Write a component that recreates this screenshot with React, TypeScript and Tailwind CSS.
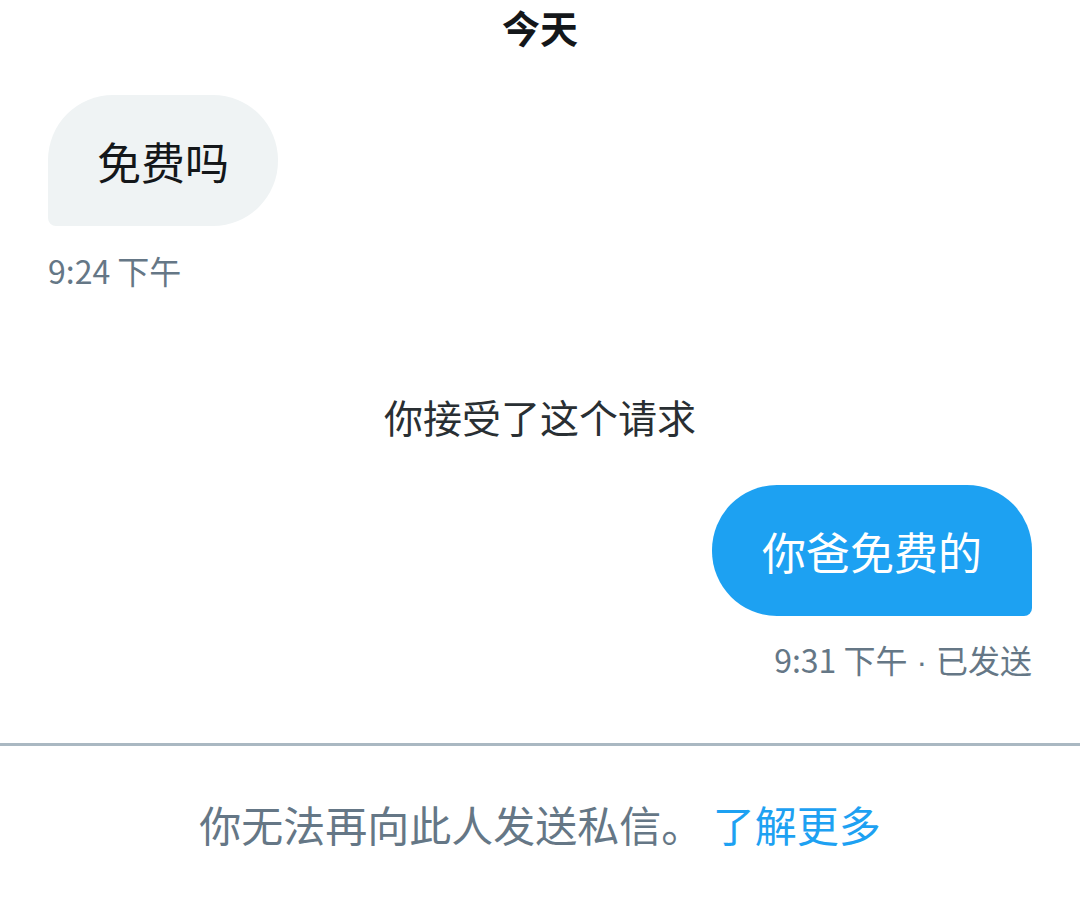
const font = {
  fontFamily: '"Noto Sans CJK SC", "Noto Sans", "Liberation Sans", sans-serif',
};

export default function App() {
  return (
    <div className="w-full min-h-[902px] bg-white flex flex-col" style={font}>
      <div className="pt-[6px] text-center text-[38px] leading-[42px] font-bold text-[#14171a]">
        今天
      </div>

      <div className="px-[48px] mt-[47px] flex flex-col items-start">
        <div className="h-[131px] px-[49px] flex items-center bg-[#eff3f4] rounded-[65px] rounded-bl-[8px] text-[44px] leading-none text-[#14171a]">
          免费吗
        </div>
        <div className="mt-[26px] text-[32px] leading-[36px] text-[#657786]">9:24 下午</div>
      </div>

      <div className="mt-[106px] text-center text-[39px] leading-[44px] text-[#292f33]">
        你接受了这个请求
      </div>

      <div className="px-[48px] mt-[47px] flex flex-col items-end">
        <div className="h-[131px] px-[50px] flex items-center bg-[#1da1f2] rounded-[65px] rounded-br-[8px] text-[44px] leading-none text-white">
          你爸免费的
        </div>
        <div className="mt-[25px] h-[36px] text-[32px] leading-[36px] text-[#657786]">
          9:31 下午
          <span className="font-['Liberation_Sans',sans-serif] leading-[36px]"> · </span>
          已发送
        </div>
      </div>

      <div className="mt-[66px] h-[3px] w-full bg-[#aab8c2]" />

      <div className="mt-[54px] text-center text-[42px] leading-[48px] text-[#657786]">
        你无法再向此人发送私信。 <span className="text-[#1da1f2]">了解更多</span>
      </div>
    </div>
  );
}
